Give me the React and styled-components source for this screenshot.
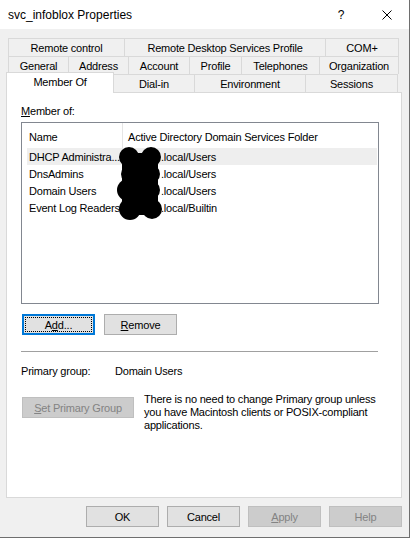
import styled, { createGlobalStyle, css } from "styled-components";

const GlobalStyle = createGlobalStyle`
  html, body {
    margin: 0;
    padding: 0;
    background: #f0f0f0;
  }
  body {
    font-family: "Liberation Sans", Arial, sans-serif;
    font-size: 11px;
    letter-spacing: -0.2px;
    color: #000;
  }
  * {
    box-sizing: border-box;
  }
`;

const Window = styled.div`
  width: 410px;
  height: 538px;
  display: flex;
  flex-direction: column;
  background: #f0f0f0;
  border-right: 1px solid #6e6e6e;
  border-bottom: 1px solid #6e6e6e;
`;

const TitleBar = styled.div`
  height: 29px;
  display: flex;
  align-items: center;
  background: #fff;
  padding-left: 8px;
  flex-shrink: 0;
`;

const Title = styled.div`
  font-size: 12px;
  letter-spacing: 0;
  flex: 1;
`;

const CaptionButton = styled.div`
  width: ${(p) => p.$w}px;
  height: 29px;
  display: flex;
  align-items: center;
  justify-content: center;
  font-size: 12px;
`;

const TabStrip = styled.div`
  padding-top: 9px;
  display: flex;
  flex-direction: column;
`;

const TabRow = styled.div`
  display: flex;
  height: 18px;
  margin-left: 8px;
`;

const Tab = styled.div`
  width: ${(p) => p.$w}px;
  height: 18px;
  display: flex;
  align-items: center;
  justify-content: center;
  padding-top: 1px;
  border-top: 1px solid #d9d9d9;
  border-right: 1px solid #d9d9d9;
  background: #f0f0f0;
  white-space: nowrap;
  &:first-child {
    border-left: 1px solid #d9d9d9;
  }
  ${(p) =>
    p.$active &&
    css`
      position: relative;
      z-index: 1;
      height: 21px;
      margin-top: -2px;
      margin-left: -2px;
      padding-bottom: 3px;
      background: #fff;
      border-left: 1px solid #d9d9d9;
    `}
`;

const Panel = styled.div`
  margin-left: 6px;
  width: 396px;
  height: 406px;
  border: 1px solid #d9d9d9;
  background: #fff;
  padding: 12px 0 0 14px;
  display: flex;
  flex-direction: column;
  flex-shrink: 0;
`;

const Label = styled.div`
  line-height: 13px;
  height: 13px;
`;

const Key = styled.u`
  text-decoration: underline;
  text-underline-offset: 1px;
`;

const ListBox = styled.div`
  position: relative;
  margin-top: 4px;
  width: 358px;
  height: 182px;
  border: 1px solid #828790;
  background: #fff;
  overflow: hidden;
`;

const Header = styled.div`
  display: flex;
  height: 25px;
`;

const HeaderCell = styled.div`
  width: ${(p) => (p.$w ? `${p.$w}px` : "auto")};
  flex: ${(p) => (p.$w ? "none" : 1)};
  display: flex;
  align-items: center;
  padding: 3px 0 0 ${(p) => p.$pad}px;
  border-right: ${(p) => (p.$w ? "1px solid #e5e5e5" : "none")};
  white-space: nowrap;
`;

const Row = styled.div`
  display: flex;
  align-items: center;
  height: 17px;
  margin: 0 1px 0 5px;
  padding-left: 2px;
  background: ${(p) => (p.$hover ? "#eeeeee" : "transparent")};
  white-space: nowrap;
`;

const Cell = styled.div`
  width: ${(p) => (p.$w ? `${p.$w}px` : "auto")};
  flex: ${(p) => (p.$w ? "none" : 1)};
  overflow: hidden;
`;

const Hidden = styled.span`
  display: inline-block;
  width: 32px;
`;

const Redaction = styled.svg`
  position: absolute;
  left: 0;
  top: 0;
  pointer-events: none;
`;

const ButtonRow = styled.div`
  display: flex;
  gap: ${(p) => p.$gap || 9}px;
  margin-top: ${(p) => p.$top || 0}px;
  margin-left: ${(p) => p.$left || 0}px;
`;

const Button = styled.div`
  position: relative;
  width: ${(p) => p.$w || 73}px;
  height: 21px;
  flex-shrink: 0;
  display: flex;
  align-items: center;
  justify-content: center;
  background: #e1e1e1;
  border: 1px solid #adadad;
  color: #000;
  ${(p) =>
    p.$disabled &&
    css`
      background: #cccccc;
      border-color: #bfbfbf;
      color: #838383;
    `}
  ${(p) =>
    p.$focused &&
    css`
      border: 2px solid #0078d7;
      &::after {
        content: "";
        position: absolute;
        inset: 1px;
        border: 1px dotted #000;
      }
    `}
`;

const Divider = styled.div`
  margin-top: 16px;
  width: 357px;
  height: 1px;
  background: #a0a0a0;
`;

const PrimaryRow = styled.div`
  display: flex;
  margin-top: 13px;
  line-height: 13px;
`;

const PrimaryLabel = styled.div`
  width: 94px;
`;

const SetRow = styled.div`
  display: flex;
  align-items: flex-start;
  margin-top: 15px;
  margin-left: 1px;
`;

const Note = styled.div`
  margin-left: 10px;
  line-height: 13px;
`;

const Footer = styled.div`
  display: flex;
  justify-content: flex-end;
  gap: 8px;
  margin-top: 8px;
  padding-right: 7px;
`;

const tabRows = [
  [
    ["Remote control", 117],
    ["Remote Desktop Services Profile", 201],
    ["COM+", 73],
  ],
  [
    ["General", 61],
    ["Address", 60],
    ["Account", 61],
    ["Profile", 52],
    ["Telephones", 78],
    ["Organization", 79],
  ],
];

const groups = [
  { name: "DHCP Administra...", folder: ".local/Users", hover: true },
  { name: "DnsAdmins", folder: ".local/Users" },
  { name: "Domain Users", folder: ".local/Users" },
  { name: "Event Log Readers", folder: ".local/Builtin" },
];

// blobs of the black marker, in list coordinates (origin 22,123)
const blobs = [
  [107, 34, 10],
  [129, 34, 10],
  [109, 51, 10],
  [128, 51, 10],
  [106, 67, 11],
  [128, 67, 10],
  [108, 86, 11],
  [130, 86, 10],
];

export default function App() {
  return (
    <>
      <GlobalStyle />
      <Window>
        <TitleBar>
          <Title>svc_infoblox Properties</Title>
          <CaptionButton $w={46}>?</CaptionButton>
          <CaptionButton $w={45}>
            <svg width="10" height="10" viewBox="0 0 10 10">
              <path d="M0.5 0.5 L9.5 9.5 M9.5 0.5 L0.5 9.5" stroke="#000" strokeWidth="1" />
            </svg>
          </CaptionButton>
        </TitleBar>

        <TabStrip>
          {tabRows.map((row, i) => (
            <TabRow key={i}>
              {row.map(([label, w]) => (
                <Tab key={label} $w={w}>
                  {label}
                </Tab>
              ))}
            </TabRow>
          ))}
          <TabRow>
            <Tab $w={108} $active>
              Member Of
            </Tab>
            <Tab $w={81}>Dial-in</Tab>
            <Tab $w={111}>Environment</Tab>
            <Tab $w={92}>Sessions</Tab>
          </TabRow>
        </TabStrip>

        <Panel>
          <Label>
            <Key>M</Key>ember of:
          </Label>
          <ListBox>
            <Header>
              <HeaderCell $w={101} $pad={7}>
                Name
              </HeaderCell>
              <HeaderCell $pad={5}>Active Directory Domain Services Folder</HeaderCell>
            </Header>
            {groups.map((g) => (
              <Row key={g.name} $hover={g.hover}>
                <Cell $w={100}>{g.name}</Cell>
                <Cell>
                  <Hidden />
                  {g.folder}
                </Cell>
              </Row>
            ))}
            <Redaction width="356" height="180">
              <rect x="100" y="30" width="36" height="62" fill="#000" />
              {blobs.map(([cx, cy, r], i) => (
                <circle key={i} cx={cx} cy={cy} r={r} fill="#000" />
              ))}
            </Redaction>
          </ListBox>

          <ButtonRow $top={10} $left={1}>
            <Button $focused>
              A<Key>d</Key>d...
            </Button>
            <Button>
              <Key>R</Key>emove
            </Button>
          </ButtonRow>

          <Divider />

          <PrimaryRow>
            <PrimaryLabel>Primary group:</PrimaryLabel>
            <div>Domain Users</div>
          </PrimaryRow>

          <SetRow>
            <Button $w={112} $disabled style={{ marginTop: 4 }}>
              <Key>S</Key>et Primary Group
            </Button>
            <Note>
              There is no need to change Primary group unless
              <br />
              you have Macintosh clients or POSIX-compliant
              <br />
              applications.
            </Note>
          </SetRow>
        </Panel>

        <Footer>
          <Button>OK</Button>
          <Button>Cancel</Button>
          <Button $disabled>
            <Key>A</Key>pply
          </Button>
          <Button $disabled>Help</Button>
        </Footer>
      </Window>
    </>
  );
}
